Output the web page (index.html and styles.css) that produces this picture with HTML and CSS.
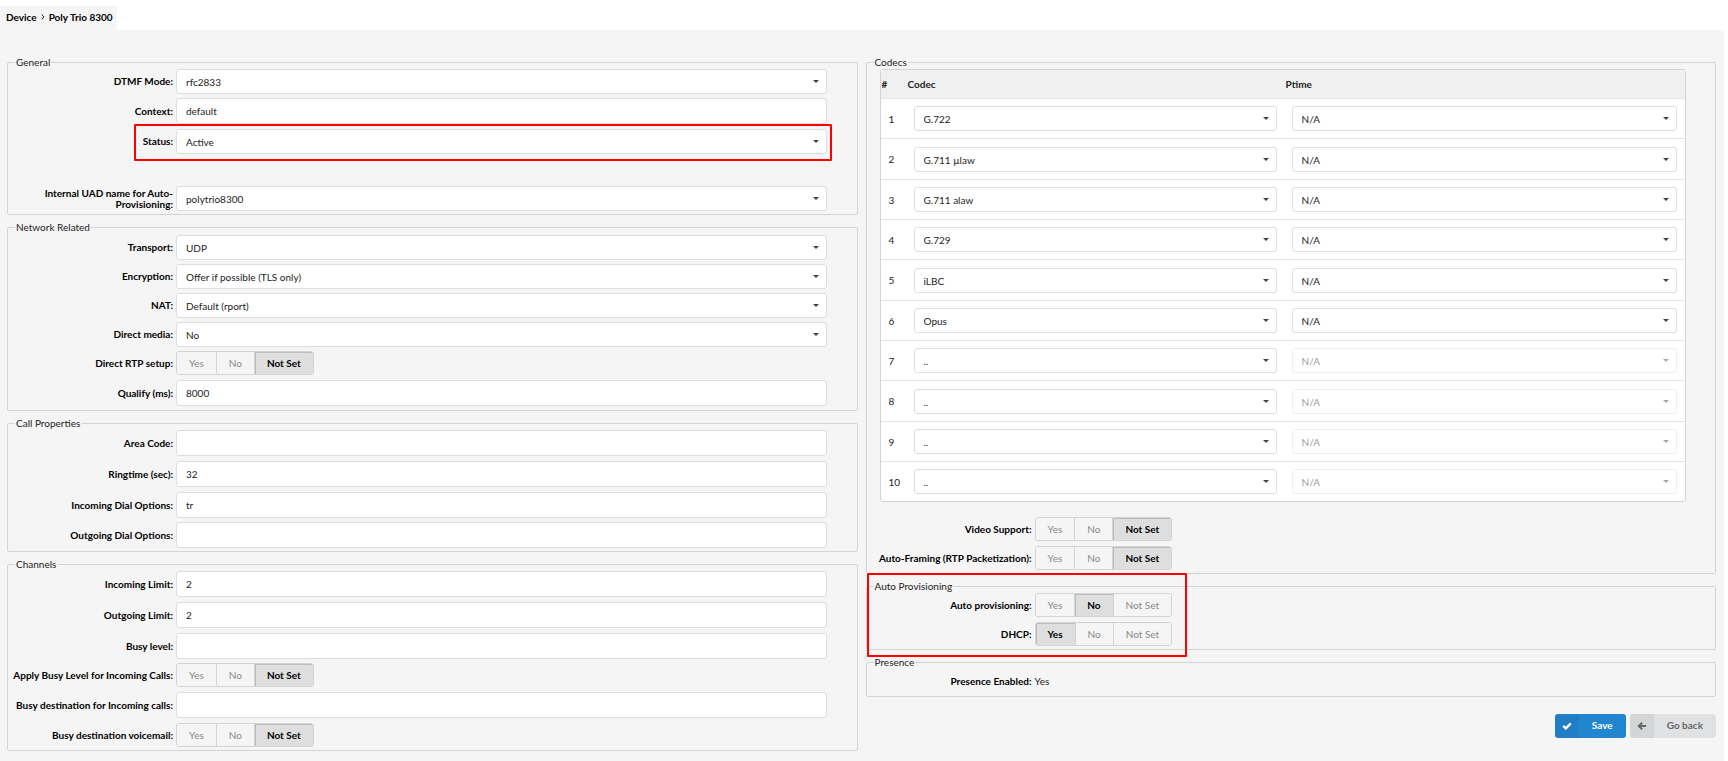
FILE: index.html
```html
<!DOCTYPE html>
<html lang="en">
<head>
<meta charset="utf-8">
<title>Device - Poly Trio 8300</title>
<link rel="stylesheet" href="styles.css">
</head>
<body>
<nav class="crumbs" aria-label="Breadcrumb">
  <a href="#">Device</a>
  <svg class="crumb-sep" viewBox="0 0 4 6" aria-hidden="true"><path d="M0.7 0.6 3.1 3 0.7 5.4"/></svg>
  <a href="#">Poly Trio 8300</a>
</nav>
<form class="page">
  <div class="column">
    <fieldset class="panel">
      <legend>General</legend>
      <div class="row row-select"><label for="dtmf">DTMF Mode:</label><span class="select"><select id="dtmf"><option>rfc2833</option></select></span></div>
      <div class="row"><label for="context">Context:</label><input id="context" type="text" value="default"></div>
      <div class="row row-status"><label for="status">Status:</label><span class="select"><select id="status"><option>Active</option></select></span></div>
      <div class="row row-select"><label for="uad">Internal UAD name for Auto-Provisioning:</label><span class="select"><select id="uad"><option>polytrio8300</option></select></span></div>
    </fieldset>

    <fieldset class="panel panel-network">
      <legend>Network Related</legend>
      <div class="row row-select"><label for="transport">Transport:</label><span class="select"><select id="transport"><option>UDP</option></select></span></div>
      <div class="row row-select"><label for="encryption">Encryption:</label><span class="select"><select id="encryption"><option>Offer if possible (TLS only)</option></select></span></div>
      <div class="row row-select"><label for="nat">NAT:</label><span class="select"><select id="nat"><option>Default (rport)</option></select></span></div>
      <div class="row row-select"><label for="media">Direct media:</label><span class="select"><select id="media"><option>No</option></select></span></div>
      <div class="row"><span class="label" id="rtp">Direct RTP setup:</span><div class="toggle" role="group" aria-labelledby="rtp"><button type="button">Yes</button><button type="button">No</button><button type="button" class="active" aria-pressed="true">Not Set</button></div></div>
      <div class="row"><label for="qualify">Qualify (ms):</label><input id="qualify" type="text" value="8000"></div>
    </fieldset>

    <fieldset class="panel">
      <legend>Call Properties</legend>
      <div class="row"><label for="area">Area Code:</label><input id="area" type="text"></div>
      <div class="row"><label for="ringtime">Ringtime (sec):</label><input id="ringtime" type="text" value="32"></div>
      <div class="row"><label for="in-dial">Incoming Dial Options:</label><input id="in-dial" type="text" value="tr"></div>
      <div class="row"><label for="out-dial">Outgoing Dial Options:</label><input id="out-dial" type="text"></div>
    </fieldset>

    <fieldset class="panel">
      <legend>Channels</legend>
      <div class="row"><label for="in-limit">Incoming Limit:</label><input id="in-limit" type="text" value="2"></div>
      <div class="row"><label for="out-limit">Outgoing Limit:</label><input id="out-limit" type="text" value="2"></div>
      <div class="row"><label for="busy">Busy level:</label><input id="busy" type="text"></div>
      <div class="row"><span class="label" id="apply-busy">Apply Busy Level for Incoming Calls:</span><div class="toggle" role="group" aria-labelledby="apply-busy"><button type="button">Yes</button><button type="button">No</button><button type="button" class="active" aria-pressed="true">Not Set</button></div></div>
      <div class="row"><label for="busy-dest">Busy destination for Incoming calls:</label><input id="busy-dest" type="text"></div>
      <div class="row"><span class="label" id="busy-vm">Busy destination voicemail:</span><div class="toggle" role="group" aria-labelledby="busy-vm"><button type="button">Yes</button><button type="button">No</button><button type="button" class="active" aria-pressed="true">Not Set</button></div></div>
    </fieldset>
  </div>

  <div class="column">
    <fieldset class="panel">
      <legend>Codecs</legend>
      <table class="codecs">
        <colgroup><col class="col-num"><col class="col-codec"><col></colgroup>
        <thead><tr><th scope="col">#</th><th scope="col">Codec</th><th scope="col">Ptime</th></tr></thead>
        <tbody>
          <tr><td>1</td><td><span class="select"><select aria-label="Codec 1"><option>G.722</option></select></span></td><td><span class="select"><select aria-label="Ptime 1"><option>N/A</option></select></span></td></tr>
          <tr><td>2</td><td><span class="select"><select aria-label="Codec 2"><option>G.711 µlaw</option></select></span></td><td><span class="select"><select aria-label="Ptime 2"><option>N/A</option></select></span></td></tr>
          <tr><td>3</td><td><span class="select"><select aria-label="Codec 3"><option>G.711 alaw</option></select></span></td><td><span class="select"><select aria-label="Ptime 3"><option>N/A</option></select></span></td></tr>
          <tr><td>4</td><td><span class="select"><select aria-label="Codec 4"><option>G.729</option></select></span></td><td><span class="select"><select aria-label="Ptime 4"><option>N/A</option></select></span></td></tr>
          <tr><td>5</td><td><span class="select"><select aria-label="Codec 5"><option>iLBC</option></select></span></td><td><span class="select"><select aria-label="Ptime 5"><option>N/A</option></select></span></td></tr>
          <tr><td>6</td><td><span class="select"><select aria-label="Codec 6"><option>Opus</option></select></span></td><td><span class="select"><select aria-label="Ptime 6"><option>N/A</option></select></span></td></tr>
          <tr><td>7</td><td><span class="select"><select aria-label="Codec 7"><option>..</option></select></span></td><td><span class="select off"><select aria-label="Ptime 7" disabled><option>N/A</option></select></span></td></tr>
          <tr><td>8</td><td><span class="select"><select aria-label="Codec 8"><option>..</option></select></span></td><td><span class="select off"><select aria-label="Ptime 8" disabled><option>N/A</option></select></span></td></tr>
          <tr><td>9</td><td><span class="select"><select aria-label="Codec 9"><option>..</option></select></span></td><td><span class="select off"><select aria-label="Ptime 9" disabled><option>N/A</option></select></span></td></tr>
          <tr><td>10</td><td><span class="select"><select aria-label="Codec 10"><option>..</option></select></span></td><td><span class="select off"><select aria-label="Ptime 10" disabled><option>N/A</option></select></span></td></tr>
        </tbody>
      </table>
      <div class="row"><span class="label" id="video">Video Support:</span><div class="toggle" role="group" aria-labelledby="video"><button type="button">Yes</button><button type="button">No</button><button type="button" class="active" aria-pressed="true">Not Set</button></div></div>
      <div class="row"><span class="label" id="framing">Auto-Framing (RTP Packetization):</span><div class="toggle" role="group" aria-labelledby="framing"><button type="button">Yes</button><button type="button">No</button><button type="button" class="active" aria-pressed="true">Not Set</button></div></div>
    </fieldset>

    <fieldset class="panel panel-provisioning">
      <legend>Auto Provisioning</legend>
      <div class="row"><span class="label" id="autoprov">Auto provisioning:</span><div class="toggle" role="group" aria-labelledby="autoprov"><button type="button">Yes</button><button type="button" class="active" aria-pressed="true">No</button><button type="button">Not Set</button></div></div>
      <div class="row"><span class="label" id="dhcp">DHCP:</span><div class="toggle" role="group" aria-labelledby="dhcp"><button type="button" class="active" aria-pressed="true">Yes</button><button type="button">No</button><button type="button">Not Set</button></div></div>
    </fieldset>

    <fieldset class="panel">
      <legend>Presence</legend>
      <div class="row row-text"><span class="label">Presence Enabled:</span><span>Yes</span></div>
    </fieldset>

    <div class="actions">
      <button type="submit" class="action action-save"><span class="action-icon"><svg viewBox="0 0 10 8" aria-hidden="true"><path d="M1.2 3.9 3.8 6.4 8.8 1.4" fill="none" stroke="currentColor" stroke-width="2.4"/></svg></span><span class="action-text">Save</span></button>
      <button type="button" class="action action-back"><span class="action-icon"><svg viewBox="0 0 10 8" aria-hidden="true"><path d="M9 4H2M5.1 0.7 1.8 4 5.1 7.3" fill="none" stroke="currentColor" stroke-width="2"/></svg></span><span class="action-text">Go back</span></button>
    </div>
  </div>
</form>
</body>
</html>
```
FILE: styles.css
```css
* {
  box-sizing: border-box;
}

body {
  margin: 0;
  padding: 6px 4px 0 0;
  background: #fff;
  color: #222;
  font: 10px/12px Lato, sans-serif;
}

input,
select,
button {
  margin: 0;
  font: inherit;
  color: inherit;
}

.crumbs {
  display: inline-flex;
  align-items: center;
  gap: 4px;
  height: 24px;
  padding: 0 4px 2px 6px;
  background: #f5f5f5;
  color: #000;
  font-weight: 700;
  vertical-align: top;
}

.crumbs a {
  color: inherit;
  text-decoration: none;
}

.crumb-sep {
  width: 4px;
  height: 6px;
  fill: none;
  stroke: #222;
}

.page {
  display: grid;
  grid-template-columns: 1fr 1fr;
  gap: 8px;
  min-height: calc(100vh - 30px);
  padding: 26px 8px 9px 7px;
  background: #f5f5f5;
}

.column {
  display: flex;
  flex-direction: column;
  gap: 6px;
  min-width: 0;
}

.panel {
  min-width: 0;
  margin: 0;
  padding: 1px 30px 3px 0;
  border: 1px solid #d4d4d5;
  border-radius: 2px;
}

.panel legend {
  margin-left: 7px;
  padding: 0 1px;
}

.panel-network {
  padding-top: 2px;
  padding-bottom: 4px;
}

.row {
  position: relative;
  display: grid;
  grid-template-columns: 165px 1fr;
  align-items: center;
  gap: 3px;
  margin-bottom: 5px;
}

.row-select,
.row:nth-child(3n + 1) {
  margin-bottom: 4px;
}

.row:last-child {
  margin-bottom: 0;
}

.row label,
.label {
  color: #000;
  font-weight: 700;
  line-height: 11px;
  text-align: right;
}

.row-text {
  padding: 6px 0;
}

input[type="text"],
select {
  display: block;
  width: 100%;
  padding: 0 9px;
  border: 1px solid #dcdddd;
  border-radius: 3px;
  background: #fff;
}

input[type="text"] {
  height: 26px;
}

select {
  height: 25px;
  padding-top: 1px;
  appearance: none;
  opacity: 1;
}

.select {
  position: relative;
  display: block;
}

.select::after {
  content: "";
  position: absolute;
  top: 11px;
  right: 8px;
  border: solid transparent;
  border-width: 3px 3px 0;
  border-top-color: #444;
  pointer-events: none;
}

.off {
  opacity: 0.45;
}

.row.row-status {
  margin-bottom: 32px;
}

.row-status::after,
.panel-provisioning::after {
  content: "";
  position: absolute;
  border: 2px solid #f00;
  border-radius: 1px;
  pointer-events: none;
}

.row-status::after {
  top: -5px;
  right: -5px;
  bottom: -7px;
  left: 126px;
}

.panel-provisioning {
  position: relative;
}

.panel-provisioning::after {
  top: -19px;
  bottom: -8px;
  left: 0;
  width: 316px;
}

.toggle {
  display: flex;
  width: max-content;
  height: 24px;
  border: 1px solid #d4d4d5;
  border-radius: 3px;
  overflow: hidden;
}

.toggle button {
  padding: 0 12px 1px;
  border: 0;
  background: #f5f5f5;
  color: #888;
}

.toggle button + button {
  border-left: 1px solid #d4d4d5;
}

.toggle .active {
  background: #dedede;
  box-shadow: inset 1px 1px 0 #bbb;
  color: #000;
  font-weight: 700;
}

.codecs {
  width: calc(100% - 12px);
  margin: 0 0 15px 13px;
  border: 1px solid #d4d4d5;
  border-radius: 3px;
  border-spacing: 0;
  background: #fff;
  table-layout: fixed;
}

.col-num {
  width: 26px;
}

.col-codec {
  width: 47%;
}

.codecs th {
  height: 28px;
  padding: 0 2px 0 1px;
  background: #f0f0f0;
  font-weight: 700;
  text-align: left;
}

.codecs td {
  height: 40px;
  padding: 0 8px 0 7px;
  border-top: 1px solid #e6e6e6;
}

.codecs td:first-child {
  padding: 0 0 0 8px;
}

.codecs tr:nth-child(3n + 2) td {
  height: 41px;
}

.actions {
  display: flex;
  justify-content: flex-end;
  gap: 4px;
  margin-top: 11px;
}

.action {
  display: flex;
  align-items: stretch;
  height: 24px;
  padding: 0;
  border: 0;
  border-radius: 3px;
  overflow: hidden;
  font-weight: 700;
}

.action-icon {
  display: flex;
  align-items: center;
  justify-content: center;
  width: 24px;
  background: rgba(0, 0, 0, 0.05);
}

.action-icon svg {
  width: 10px;
  height: 8px;
}

.action-text {
  padding: 5px 13px 0;
}

.action-save {
  background: #2185d0;
  color: #fff;
}

.action-back {
  background: #e0e1e2;
  color: #666;
}
```
